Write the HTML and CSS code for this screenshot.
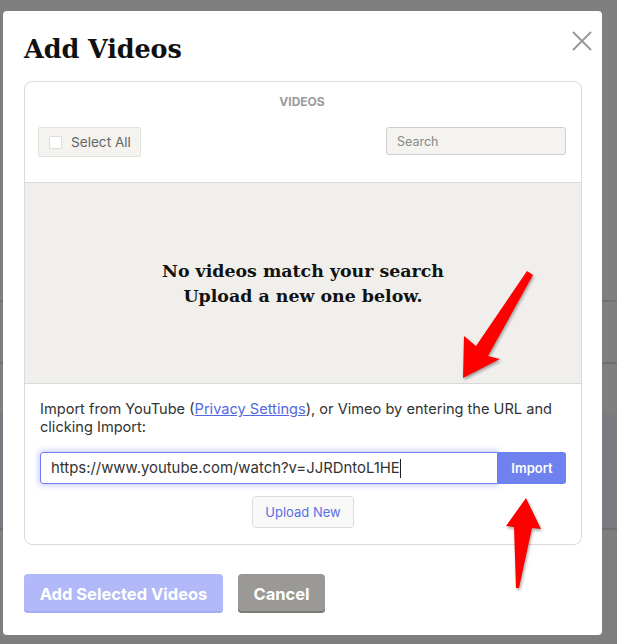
FILE: index.html
```html
<!DOCTYPE html>
<html>
<head>
<meta charset="utf-8">
<link rel="stylesheet" href="styles.css">
</head>
<body>
<div class="backdrop">
  <div class="modal">
    <button class="close" aria-label="Close">
      <svg width="20" height="20" viewBox="0 0 20 20"><path d="M1 1 L19 19 M19 1 L1 19" stroke="#9a9a9a" stroke-width="2" fill="none"/></svg>
    </button>
    <h1 class="title">Add Videos</h1>
    <div class="panel">
      <div class="panel-head">
        <div class="panel-label">VIDEOS</div>
        <div class="toolbar">
          <label class="select-all"><span class="checkbox"></span>Select All</label>
          <div class="search">Search</div>
        </div>
      </div>
      <div class="empty">
        <p>No videos match your search<br>Upload a new one below.</p>
      </div>
      <div class="import">
        <p class="import-text">Import from YouTube (<a href="#">Privacy Settings</a>), or Vimeo by entering the URL and clicking Import:</p>
        <div class="url-row">
          <div class="url-input">https://www.youtube.com/watch?v=JJRDntoL1HE<span class="caret"></span></div>
          <button class="import-btn">Import</button>
        </div>
        <div class="upload-row"><button class="upload-btn">Upload New</button></div>
      </div>
    </div>
    <div class="footer">
      <button class="btn-primary">Add Selected Videos</button>
      <button class="btn-cancel">Cancel</button>
    </div>
    <svg class="arrow" width="617" height="644" viewBox="0 0 617 644">
      <polygon points="463,378 464,336 476,346 527,271 533,275 488,356 500,359" fill="#ff0000"/>
    </svg>
    <svg class="arrow" width="617" height="644" viewBox="0 0 617 644">
      <polygon points="526,498 541,529 532,528 519,588 516,588 514,527 506,526" fill="#ff0000"/>
    </svg>
  </div>
</div>
</body>
</html>
```

FILE: styles.css
```css
* { box-sizing: border-box; }
html, body { margin: 0; padding: 0; }
body {
  width: 617px;
  height: 644px;
  overflow: hidden;
  font-family: "Inter", "Liberation Sans", sans-serif;
  background:
    linear-gradient(to bottom,
      transparent 0, transparent 300px,
      #727272 300px, #727272 302px,
      transparent 302px, transparent 362px,
      #6e6e6e 362px, #6e6e6e 364px,
      transparent 364px, transparent 528px,
      #6e6e6e 528px, #6e6e6e 530px,
      transparent 530px),
    linear-gradient(to bottom,
      #7f7f7f 0, #7f7f7f 413px,
      #7a7a80 413px, #7a7a80 529px,
      #7e7e7f 529px);
}
.backdrop {
  padding: 11px 15px 0 3px;
}
.modal {
  position: relative;
  width: 599px;
  height: 624px;
  background: #fff;
  border-radius: 4px;
  padding: 23px 20px 0 21px;
}
.close {
  position: absolute;
  top: 20px;
  right: 10px;
  width: 20px;
  height: 20px;
  padding: 0;
  border: 0;
  background: none;
}
.close svg { display: block; }
.title {
  margin: 0;
  font-family: "DejaVu Serif", serif;
  font-weight: bold;
  font-size: 25.5px;
  line-height: 30px;
  color: #111;
  letter-spacing: -0.1px;
}
.panel {
  margin-top: 17px;
  border: 1px solid #dadada;
  border-radius: 8px;
  overflow: hidden;
}
.panel-head {
  padding: 12px 15px 25px 13px;
}
.panel-label {
  text-align: center;
  font-size: 12px;
  font-weight: 700;
  line-height: 16px;
  color: #9b9b9b;
}
.toolbar {
  margin-top: 17px;
  display: flex;
  justify-content: space-between;
  align-items: flex-start;
}
.select-all {
  display: flex;
  align-items: center;
  gap: 9px;
  height: 30px;
  padding: 0 9px 0 10px;
  background: #f4f3ef;
  border: 1px solid #e2e1dc;
  border-radius: 2px;
  font-size: 13.6px;
  color: #666;
}
.checkbox {
  width: 13px;
  height: 13px;
  background: #fff;
  border: 1px solid #dcdcdc;
  border-radius: 1px;
}
.search {
  width: 180px;
  height: 28px;
  background: #f4f3ef;
  border: 1px solid #cfcfcf;
  border-radius: 3px;
  padding: 0 10px;
  font-size: 12.5px;
  line-height: 28px;
  color: #888;
}
.empty {
  height: 202px;
  background: #f0efeb;
  border-top: 1px solid #d9d9d9;
  border-bottom: 1px solid #d9d9d9;
  display: flex;
  align-items: center;
  justify-content: center;
}
.empty p {
  margin: 0;
  text-align: center;
  font-family: "DejaVu Serif", serif;
  font-weight: bold;
  font-size: 17.4px;
  line-height: 25px;
  color: #111;
  padding-top: 2px;
}
.import {
  padding: 16px 15px 16px 15px;
}
.import-text {
  margin: 0;
  font-size: 14.6px;
  line-height: 18px;
  color: #333;
}
.import-text a {
  color: #5468e0;
  text-decoration: underline;
}
.url-row {
  margin-top: 16px;
  display: flex;
  height: 32px;
}
.url-input {
  flex: 1;
  border: 1px solid #6c7ef0;
  border-radius: 3px 0 0 3px;
  box-shadow: 0 0 6px 1px rgba(110, 125, 255, 0.45);
  padding: 0 10px;
  font-size: 14.9px;
  line-height: 30px;
  color: #333;
  display: flex;
  align-items: center;
}
.caret {
  display: inline-block;
  width: 1px;
  height: 19px;
  background: #222;
}
.import-btn {
  width: 68px;
  border: 0;
  border-radius: 0 3px 3px 0;
  background: #6f80ef;
  color: #fff;
  font-family: "Inter", sans-serif;
  font-size: 13px;
  font-weight: 600;
}
.upload-row {
  margin-top: 12px;
  display: flex;
  justify-content: center;
}
.upload-btn {
  height: 32px;
  padding: 0 12px;
  background: #f9f9f7;
  border: 1px solid #dcdcdc;
  border-radius: 4px;
  color: #5a6ee5;
  font-family: "Inter", sans-serif;
  font-size: 13px;
}
.footer {
  margin-top: 29px;
  display: flex;
  gap: 15px;
}
.footer button {
  height: 39px;
  border: 0;
  border-radius: 4px;
  color: #fff;
  font-family: "Inter", sans-serif;
  font-size: 16.5px;
  font-weight: 700;
  white-space: nowrap;
}
.btn-primary {
  width: 199px;
  background: #b1b9f8;
  box-shadow: inset 0 -2px 0 #a4adf3;
}
.btn-cancel {
  width: 87px;
  background: #9a9995;
  box-shadow: inset 0 -2px 0 #7c7b78;
}
.arrow {
  position: absolute;
  left: -3px;
  top: -11px;
  pointer-events: none;
  filter: drop-shadow(1px 2px 1.5px rgba(0,0,0,0.35));
}
```
